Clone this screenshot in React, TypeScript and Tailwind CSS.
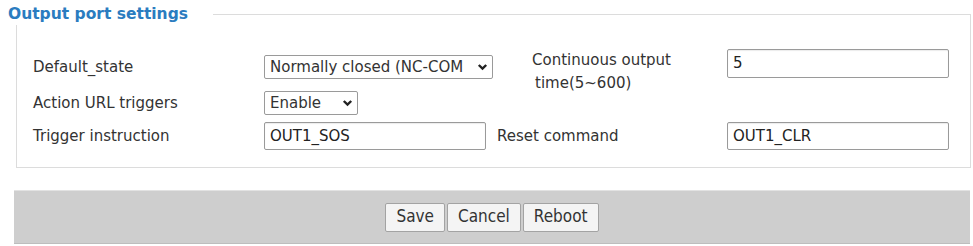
import React from "react";

const font = { fontFamily: '"DejaVu Sans", "Liberation Sans", sans-serif' };

const Chevron = () => (
  <svg width="11" height="8" viewBox="0 0 11 8" className="shrink-0">
    <path d="M1.8 2 L5.5 5.6 L9.2 2" fill="none" stroke="#222" strokeWidth="2.4" />
  </svg>
);

const FakeSelect = ({ value, width }: { value: string; width: string }) => (
  <div
    className={`flex h-[24px] ${width} items-center justify-between rounded-[2px] border border-[#9a9a9a] bg-white pl-[5px] pr-[4px] text-[15px] text-[#333]`}
  >
    <span className="whitespace-nowrap overflow-hidden">{value}</span>
    <Chevron />
  </div>
);

const TextBox = ({ value, width, height }: { value: string; width: string; height: string }) => (
  <div
    className={`flex ${height} ${width} items-center rounded-[2px] border border-[#9a9a9a] bg-white px-[5px] text-[15px] text-[#222] shadow-[inset_0_1px_1px_rgba(0,0,0,0.08)]`}
  >
    {value}
  </div>
);

export default function App() {
  return (
    <div className="h-[246px] w-[973px] bg-white text-[#333]" style={font}>
      <fieldset className="ml-[16px] mt-[4px] w-[955px] border border-[#dcdcdc] px-0 pb-[14px] pt-[22px]">
        <legend className="-ml-[9px] bg-white pr-[25px] text-[15.5px] font-bold leading-[21px] text-[#2b7cc0]">
          Output port settings
        </legend>

        <div className="flex flex-col pl-[16px] text-[15px]">
          <div className="flex h-[40px] items-center">
            <div className="w-[231px]">Default_state</div>
            <div className="w-[233px]">
              <FakeSelect value="Normally closed (NC-COM" width="w-[229px]" />
            </div>
            <div className="w-[230px] self-start pl-[35px] pt-[2px] leading-[23px]">
              <div>Continuous output</div>
              <div className="pl-[3px]">time(5~600)</div>
            </div>
            <div className="self-start pt-[2px]">
              <TextBox value="5" width="w-[222px]" height="h-[29px]" />
            </div>
          </div>

          <div className="flex h-[32px] items-center">
            <div className="w-[231px]">Action URL triggers</div>
            <FakeSelect value="Enable" width="w-[94px]" />
          </div>

          <div className="flex h-[34px] items-center">
            <div className="w-[231px]">Trigger instruction</div>
            <div className="w-[233px]">
              <TextBox value="OUT1_SOS" width="w-[222px]" height="h-[28px]" />
            </div>
            <div className="w-[230px]">Reset command</div>
            <TextBox value="OUT1_CLR" width="w-[222px]" height="h-[28px]" />
          </div>
        </div>
      </fieldset>

      <div className="ml-[14px] mt-[22px] flex h-[54px] w-[956px] items-center justify-center gap-[2px] border-t border-[#e2e2e2] border-b border-b-[#bdbdbd] bg-[#cecece]">
        {["Save", "Cancel", "Reboot"].map((label) => (
          <button
            key={label}
            className="h-[29px] rounded-[2px] border border-[#a3a3a3] bg-[#f4f4f4] px-[10px] text-[17px] text-[#333]"
            style={{ fontFamily: '"DejaVu Sans Condensed", "DejaVu Sans", sans-serif', fontStretch: "condensed" }}
          >
            {label}
          </button>
        ))}
      </div>
    </div>
  );
}
